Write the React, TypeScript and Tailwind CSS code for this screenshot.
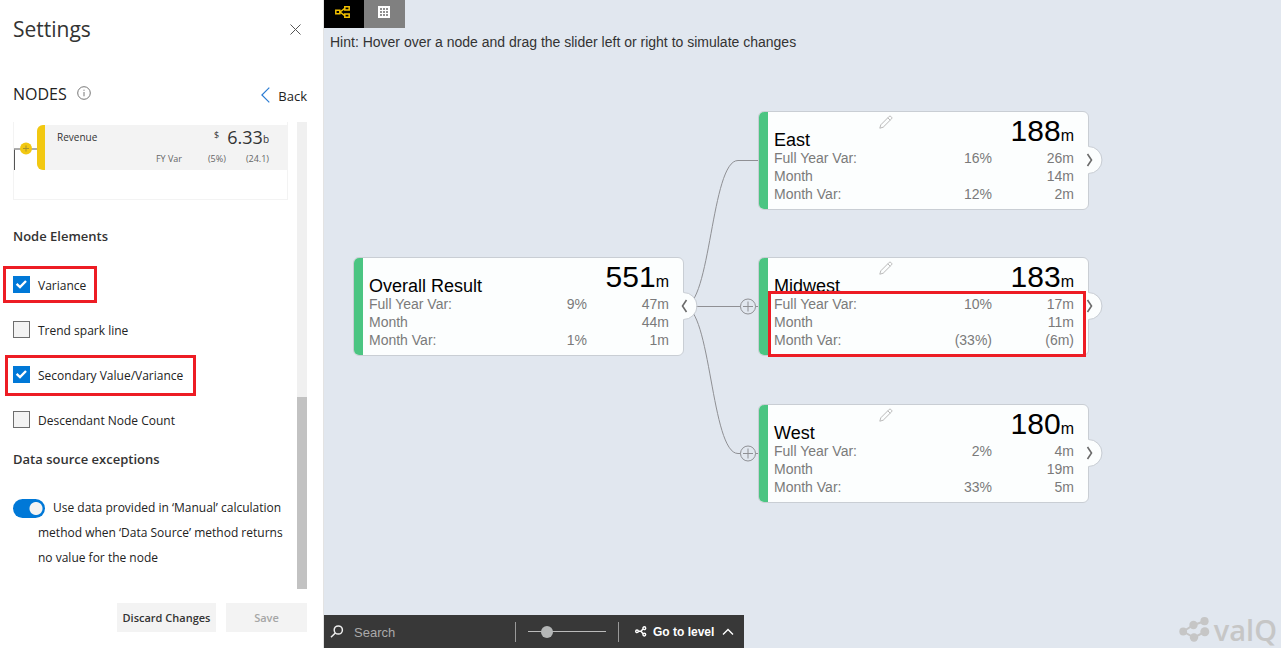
import { useState } from "react";
import type { ReactNode } from "react";

type Row = { label: string; pct?: string; value: string };
type NodeData = { title: string; total: string; rows: Row[] };

const rows = (a: string, b: string, c: string, d: string, e: string): Row[] => [
  { label: "Full Year Var:", pct: a, value: b },
  { label: "Month", value: c },
  { label: "Month Var:", pct: d, value: e },
];

const overall: NodeData = { title: "Overall Result", total: "551", rows: rows("9%", "47m", "44m", "1%", "1m") };
const east: NodeData = { title: "East", total: "188", rows: rows("16%", "26m", "14m", "12%", "2m") };
const midwest: NodeData = { title: "Midwest", total: "183", rows: rows("10%", "17m", "11m", "(33%)", "(6m)") };
const west: NodeData = { title: "West", total: "180", rows: rows("2%", "4m", "19m", "33%", "5m") };

function NodeCard({ data, place, root, marked }: { data: NodeData; place: string; root?: boolean; marked?: boolean }) {
  return (
    <article className={`absolute w-[331px] ${place}`}>
      <div className="flex overflow-hidden rounded-md border border-[#c9ced4] bg-[#fcfefe]">
        <div className="w-[9px] shrink-0 bg-[#4bc582]" />
        <div className="flex-1 pr-3.5 pb-1.5 pl-1.5">
          <div className="flex h-[37px] items-start justify-between pt-1">
            <h3 className="mt-3.5 text-[18px] leading-5 text-black">{data.title}</h3>
            <p className="text-[30px] leading-[30px] text-black">
              {data.total}
              <span className="text-[16px]">m</span>
            </p>
          </div>
          <table className="w-full text-[14px] leading-[18px] text-[#7a7a7a]">
            <tbody>
              {data.rows.map((r) => (
                <tr key={r.label}>
                  <th scope="row" className="p-0 text-left font-normal">{r.label}</th>
                  <td className="p-0 text-right">{r.pct}</td>
                  <td className="w-[82px] p-0 text-right">{r.value}</td>
                </tr>
              ))}
            </tbody>
          </table>
        </div>
      </div>
      {!root && (
        <button aria-label={`Edit ${data.title}`} className="absolute top-1 left-[121px]">
          <svg width="14" height="14" viewBox="0 0 14 14" fill="none" stroke="#b9b9b9" strokeWidth="1">
            <path d="M0.8 13.2 L1.8 9.8 L10.2 1.4 Q11 .6 11.8 1.4 L12.6 2.2 Q13.4 3 12.6 3.8 L4.2 12.2 Z M8.8 2.8 L11.2 5.2" />
          </svg>
        </button>
      )}
      <button aria-label={root ? "Collapse" : `Expand ${data.title}`} className="absolute top-[35px] -right-3.5">
        <svg width="28" height="28" viewBox="0 0 28 28" fill="none">
          <circle cx="13" cy="14" r="13.5" fill="#fcfefe" />
          <path d="M13.5 .5 A13.5 13.5 0 0 1 13.5 27.5" stroke="#c9ced4" />
          <path d={root ? "M16.5 8 L12.5 14 L16.5 20" : "M12.5 8 L16.5 14 L12.5 20"} stroke="#6b6b6b" strokeWidth="1.6" />
        </svg>
      </button>
      {marked && <div className="absolute top-[34px] left-2.5 h-[66px] w-[318px] border-[3px] border-[#ed1c24]" />}
    </article>
  );
}

function Check({ label, on, mark }: { label: string; on?: boolean; mark?: string }) {
  return (
    <label className="relative flex h-[45px] items-center gap-2 text-[12px] text-[#222]">
      <input
        type="checkbox"
        defaultChecked={on}
        className="peer size-[17px] shrink-0 appearance-none border border-[#6e6e6e] bg-[#f3f3f3] checked:border-[#0078d7] checked:bg-[#0078d7]"
      />
      <svg className="pointer-events-none absolute left-0 hidden size-[17px] peer-checked:block" viewBox="0 0 17 17" fill="none" stroke="white" strokeWidth="2.4">
        <path d="M3.6 7.8 L7 11 L13 5" />
      </svg>
      <span className="pt-0.5">{label}</span>
      {mark && <span className={`absolute border-[3px] border-[#ed1c24] ${mark}`} />}
    </label>
  );
}

function Heading({ children }: { children: ReactNode }) {
  return <h3 className="text-[13px] leading-5 font-semibold text-[#333]">{children}</h3>;
}

function Preview() {
  return (
    <div className="flex h-[78px] border-x border-b border-[#f3f3f3] pt-[3px]">
      <svg width="23" height="46" viewBox="0 0 23 46" fill="none" className="shrink-0">
        <path d="M.5 45 V24.5" stroke="#555" />
        <path d="M0 24 H23" stroke="#8a8a8a" strokeWidth="1.4" />
        <circle cx="12" cy="23.5" r="6" fill="#f2c811" />
        <path d="M9 23.5 H15 M12 20.5 V26.5" stroke="#a8922a" />
      </svg>
      <div className="flex h-[45px] flex-1 overflow-hidden rounded-l-md bg-[#f3f3f3] text-[#333]">
        <div className="w-2 bg-[#f2c811]" />
        <div className="flex flex-1 justify-between pr-[18px] pl-3">
          <span className="pt-1 text-[10px] leading-4">Revenue</span>
          <div className="flex flex-col items-end">
            <p className="flex items-start leading-6">
              <span className="pr-2 text-[9px] leading-5">$</span>
              <span className="text-[18px]">6.33</span>
              <span className="pt-0.5 text-[10px]">b</span>
            </p>
            <p className="flex gap-5 text-[9px] leading-4 text-[#666]">
              <span className="pr-1.5">FY Var</span>
              <span>(5%)</span>
              <span>(24.1)</span>
            </p>
          </div>
        </div>
      </div>
    </div>
  );
}

function Sidebar() {
  return (
    <aside className="flex w-[324px] shrink-0 flex-col border-r border-[#e3e3e3] bg-white pr-4 pb-4 pl-[13px] font-['Open_Sans','Noto_Sans',sans-serif]">
      <header className="flex h-[58px] items-center justify-between pr-1.5">
        <h1 className="pt-0.5 text-[21px] text-[#333]">Settings</h1>
        <button aria-label="Close">
          <svg width="11" height="11" viewBox="0 0 11 11" stroke="#555" fill="none"><path d="M.5 .5 L10.5 10.5 M10.5 .5 L.5 10.5" /></svg>
        </button>
      </header>
      <div className="mt-6 flex h-[26px] items-center">
        <h2 className="pb-0.5 text-[16px] font-medium text-[#222]">NODES</h2>
        <svg className="mb-1 ml-2.5" width="14" height="14" viewBox="0 0 14 14" fill="none" stroke="#666" strokeWidth=".9">
          <circle cx="7" cy="7" r="6.3" /><path d="M7 6 V10.3 M7 3.7 V4.8" />
        </svg>
        <button className="ml-auto flex items-center gap-2 text-[13px] text-[#222]">
          <svg width="9" height="16" viewBox="0 0 9 16" fill="none" stroke="#2b7cd3" strokeWidth="1.2"><path d="M8.3 .6 L.9 8 L8.3 15.4" /></svg>
          <span className="pt-1">Back</span>
        </button>
      </div>
      <div className="mt-3.5 flex justify-between">
        <div className="w-[275px] pb-[19px]">
          <Preview />
          <div className="mt-[26px]"><Heading>Node Elements</Heading></div>
          <div className="mt-4">
            <Check label="Variance" on mark="top-1 -left-2.5 h-[37px] w-[94px]" />
            <Check label="Trend spark line" />
            <Check label="Secondary Value/Variance" on mark="top-[3px] -left-2 h-[41px] w-[191px]" />
            <Check label="Descendant Node Count" />
          </div>
          <div className="mt-[7px]"><Heading>Data source exceptions</Heading></div>
          <label className="mt-[26px] block pl-[25px] -indent-[25px] text-[12px] leading-[25px] text-[#222]">
            <input
              type="checkbox"
              role="switch"
              defaultChecked
              className="mr-2 h-[19px] w-8 appearance-none rounded-full bg-[#0078d7] bg-[radial-gradient(circle_at_23px_50%,#f3f3f3_6px,transparent_7px)] align-middle"
            />
            Use data provided in ‘Manual’ calculation method when ‘Data Source’ method returns no value for the node
          </label>
        </div>
        <div className="flex w-2.5 flex-col justify-end bg-[#f0f0f0]"><div className="h-48 bg-[#c2c2c2]" /></div>
      </div>
      <footer className="mt-auto flex justify-end gap-2.5 pt-3 text-[11px] font-semibold">
        <button className="h-[29px] w-[99px] bg-[#f3f3f3] pt-0.5 whitespace-nowrap text-[#333]">Discard Changes</button>
        <button className="h-[29px] w-[81px] bg-[#f3f3f3] pt-0.5 text-[#a6a6a6]" disabled>Save</button>
      </footer>
    </aside>
  );
}

function Canvas() {
  return (
    <div className="absolute inset-0 overflow-hidden">
      <svg className="absolute top-0 left-0" width="760" height="520" viewBox="0 0 760 520" fill="none" stroke="#8f9094">
        <path d="M360 306.5 H435 M360 306.5 C387 306.5 387 160.5 414 160.5 H435 M360 306.5 C387 306.5 387 453.5 414 453.5 H435" />
        {[306.5, 453.5].map((y) => (
          <g key={y}>
            <circle cx="424" cy={y} r="7.5" fill="#e1e7ef" />
            <path d={`M419 ${y} H429 M424 ${y - 5} V${y + 5}`} />
          </g>
        ))}
      </svg>
      <NodeCard data={overall} root place="top-[257px] left-[29px]" />
      <NodeCard data={east} place="top-[111px] left-[434px]" />
      <NodeCard data={midwest} marked place="top-[257px] left-[434px]" />
      <NodeCard data={west} place="top-[404px] left-[434px]" />
    </div>
  );
}

export default function App() {
  const [zoom, setZoom] = useState(20);
  return (
    <div className="flex min-h-screen bg-[#e1e7ef] font-['Liberation_Sans',Arial,sans-serif]">
      <Sidebar />
      <main className="relative flex flex-1 flex-col">
        <Canvas />
        <div className="relative flex">
          <button aria-label="Tree view" className="flex h-7 w-10 items-center justify-center bg-black pr-1 pb-1">
            <svg width="15" height="12" viewBox="0 0 15 12" fill="none" stroke="#f2c000" strokeWidth="1.5">
              <path d="M.8 4.3 H4.8 V7.7 H.8 Z M9.8 .8 H14.2 V4 H9.8 Z M9.8 8 H14.2 V11.2 H9.8 Z M5 6 L9.8 2.4 M5 6 L9.8 9.6" />
            </svg>
          </button>
          <button aria-label="Table view" className="flex h-7 w-[41px] items-center justify-center bg-[#808080] pr-0.5 pb-1">
            <svg width="12" height="12" viewBox="0 0 12 12">
              <rect width="12" height="12" fill="white" />
              <path d="M2 2 H4 V4 H2 Z M5 2 H7 V4 H5 Z M8 2 H10 V4 H8 Z M2 5 H4 V7 H2 Z M5 5 H7 V7 H5 Z M8 5 H10 V7 H8 Z M2 8 H4 V10 H2 Z M5 8 H7 V10 H5 Z M8 8 H10 V10 H8 Z" fill="#909090" />
            </svg>
          </button>
        </div>
        <p className="relative px-1.5 pt-1 text-[14px] leading-5 text-[#333]">
          Hint: Hover over a node and drag the slider left or right to simulate changes
        </p>
        <div className="relative mt-auto flex items-end justify-between">
          <div className="flex h-[33px] w-[420px] items-center bg-[#383838] text-white">
            <svg className="ml-1.5 shrink-0" width="14" height="14" viewBox="0 0 14 14" fill="none" stroke="#eee" strokeWidth="1.5">
              <circle cx="8.3" cy="5" r="4.1" /><path d="M5.3 8 L1 12.3" />
            </svg>
            <input aria-label="Search" placeholder="Search" className="ml-2.5 w-[161px] bg-transparent pt-0.5 text-[13px] outline-none placeholder:text-[#aaa]" />
            <div className="h-5 w-px bg-[#999]" />
            <input
              aria-label="Zoom"
              type="range"
              value={zoom}
              onChange={(e) => setZoom(Number(e.target.value))}
              className="mx-3 h-3 w-[78px] appearance-none bg-[linear-gradient(#bbb,#bbb)] bg-[length:100%_1px] bg-center bg-no-repeat [&::-webkit-slider-thumb]:size-3 [&::-webkit-slider-thumb]:appearance-none [&::-webkit-slider-thumb]:rounded-full [&::-webkit-slider-thumb]:bg-[#b5b7b7]"
            />
            <div className="h-5 w-px bg-[#999]" />
            <button className="ml-4 flex items-center gap-1.5 text-[12px] font-bold whitespace-nowrap">
              <svg width="12" height="11" viewBox="0 0 12 11" fill="none" stroke="white" strokeWidth="1.4">
                <circle cx="2" cy="5.3" r="1.3" /><circle cx="9.3" cy="2.2" r="1.4" /><circle cx="9.3" cy="8.6" r="1.4" />
                <path d="M3.3 5.3 H6 L8 3 M6 5.3 L8 7.8" />
              </svg>
              Go to level
              <svg className="ml-0.5" width="12" height="8" viewBox="0 0 12 8" fill="none" stroke="white" strokeWidth="1.4"><path d="M1 6.5 L6 1.5 L11 6.5" /></svg>
            </button>
          </div>
          <div className="flex items-center gap-1 pr-1 text-[#c6c6c6]">
            <svg width="31" height="27" viewBox="0 0 31 27" fill="currentColor" stroke="none">
              <circle cx="4.2" cy="14.5" r="3.9" /><circle cx="14.5" cy="8" r="4.2" /><circle cx="25.5" cy="4.2" r="4.1" />
              <circle cx="25.8" cy="14.8" r="4.5" /><circle cx="15" cy="20.5" r="4.2" />
              <path d="M4.2 14.5 L14.5 8 L25.5 4.2 M4.2 14.5 L15 20.5 L25.8 14.8" fill="none" stroke="currentColor" strokeWidth="2" />
            </svg>
            <span className="font-['Open_Sans',sans-serif] text-[29px] leading-9 font-semibold">valQ</span>
          </div>
        </div>
      </main>
    </div>
  );
}
